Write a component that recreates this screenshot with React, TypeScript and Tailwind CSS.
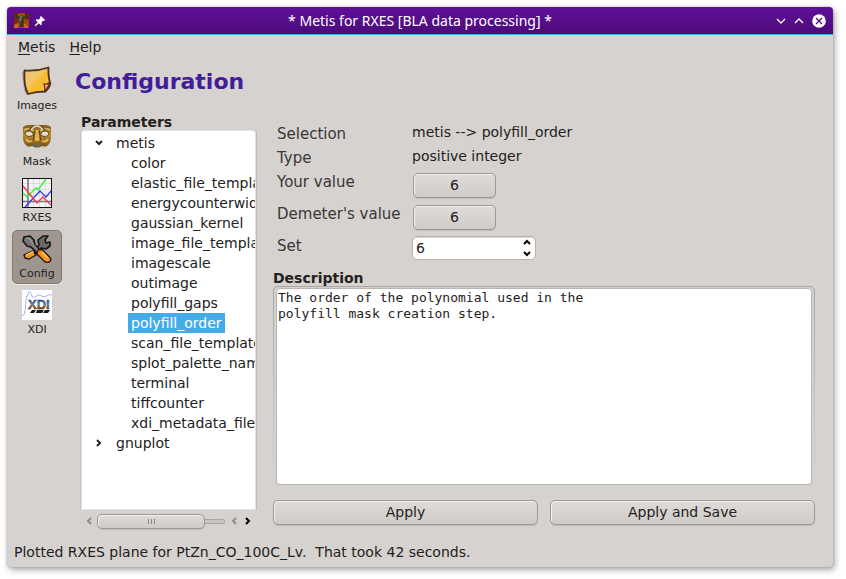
import { useState } from "react";
import type { ReactNode } from "react";

const parameters = [
  "color",
  "elastic_file_template",
  "energycounterwidth",
  "gaussian_kernel",
  "image_file_template",
  "imagescale",
  "outimage",
  "polyfill_gaps",
  "polyfill_order",
  "scan_file_template",
  "splot_palette_name",
  "terminal",
  "tiffcounter",
  "xdi_metadata_file",
];

const raised =
  "rounded-[5px] border border-[#9c9894] bg-linear-to-b from-[#dedbd8] to-[#cfcbc8] shadow-[inset_1px_1px_0_#f3f1f0,0_1px_0_#c2beba]";

const fieldLabel = "pt-[2px] text-[15px] leading-[20px] text-[#3a3735]";

function Chevron({ d, className = "stroke-2" }: { d: string; className?: string }) {
  return (
    <svg viewBox="0 0 10 10" className={`block size-[10px] shrink-0 fill-none stroke-current ${className}`}>
      <path d={d} />
    </svg>
  );
}

function AppIcon() {
  return (
    <svg viewBox="0 0 16 16" className="size-[15px]">
      <rect width="16" height="16" fill="#a4470f" />
      <path d="M0 0h5l-2 5 1 5-4 2zM11 0h5v6l-3 2-1-4z" fill="#652a0d" />
      <path d="M2 2l4 2 2-2 2 2 4-2-1 3-3 2 1 4-1 4H6l0-4-2-4-2-2z" fill="#3a3324" />
      <path d="M7 3l2 1-1 2-2 0zM4 5l2 2 2-1-1 4z" fill="#8b8060" />
      <path d="M10 11l3 1 2 4h-4zM0 13l5-2-1 5H0z" fill="#ce671b" />
    </svg>
  );
}

function PinIcon() {
  return (
    <svg viewBox="0 0 10 10" className="size-[10px] fill-white">
      <path d="M6 0l4 4-1 1-1-.3-1.500 1.500.3 2.300-1 .8-2-2L1 10H0V9l2.700-2.800-2-2 .8-1 2.300.3L5.300 2 5 1z" />
    </svg>
  );
}

function ImagesIcon() {
  return (
    <svg viewBox="0 0 30 30" className="size-[30px]">
      <defs>
        <linearGradient id="paper" x1="0" y1="0" x2="1" y2="1">
          <stop offset="0" stopColor="#e6c376" />
          <stop offset="0.400" stopColor="#f3c868" />
          <stop offset="0.550" stopColor="#f8bb30" />
          <stop offset="1" stopColor="#f4c043" />
        </linearGradient>
      </defs>
      <path d="M0 6l3-2 2 20 3 3-3 2-3-4z" fill="#a8a39f" />
      <path d="M2.500 4.500Q15 5.500 26.500 1.500 26 11 28.300 17.500 28 21 23.500 25.500 14 25.500 6 28 1.500 20 2.500 4.500z" fill="url(#paper)" stroke="#4f2f22" strokeWidth="1.800" strokeLinejoin="round" />
      <path d="M27.500 16.500q-2 2-5.500 1.500 1.500 3.500.5 7 4-2.500 5-8.500z" fill="#e8662d" stroke="#5b2c1c" strokeWidth="1.200" />
      <path d="M23 19l2.500-.5-1.500 4z" fill="#ffc09a" />
    </svg>
  );
}

function MaskIcon() {
  return (
    <svg viewBox="0 0 30 30" className="size-[30px]">
      <defs>
        <linearGradient id="gold" x1="0" y1="0" x2="0" y2="1">
          <stop offset="0" stopColor="#7d5b1b" />
          <stop offset="0.450" stopColor="#b98c33" />
          <stop offset="1" stopColor="#714a10" />
        </linearGradient>
      </defs>
      <path d="M1 5Q4 2.500 8 3h14q4-.5 7 2v12q-1 5-4 7-2 1-5 0-5 3-10 0-3 1-5 0-3-2-4-7z" fill="url(#gold)" />
      <path d="M2 8q5-3 10 1M28 8q-5-3-10 1" stroke="#dbb85c" strokeWidth="1.500" fill="none" />
      <path d="M7 8l5-4M23 8l-5-4" stroke="#50380f" strokeWidth="1.200" />
      <path d="M9 8q3-4 6-4t6 4" stroke="#e8e2d6" strokeWidth="1.300" fill="none" />
      <path d="M3 11q4-4 8 0 1 3-4 3.500-4 0-4-3.500zM19 11q4-4 8 0 0 3.500-4 3.500-5-.5-4-3.500z" fill="#e3ddd7" stroke="#4c3410" strokeWidth=".8" />
      <path d="M14 8l-1.500 10 2.500 1.500 2.500-1.500L16 8z" fill="#e1b64c" />
      <path d="M12.500 9l-1 9M17.500 9l1 9" stroke="#4d330b" strokeWidth="1" />
      <path d="M4 17q2 4 6 2M26 17q-2 4-6 2" stroke="#e5bc58" strokeWidth="1.800" fill="none" />
      <path d="M10 23q5-2 10 0-5 3.500-10 0z" fill="#69675f" />
    </svg>
  );
}

function PlotIcon() {
  return (
    <svg viewBox="0 0 30 30" className="size-[30px]" fill="none">
      <rect x=".5" y=".5" width="29" height="29" fill="#f4f3f4" stroke="#111" />
      <path d="M1 5.500h28M1 11.500h28M1 17.500h28M11.500 1v28M17.500 1v28M23.500 1v28" stroke="#dbdadd" />
      <path d="M6 1v28M1 23.500h28" stroke="#777" strokeWidth="1.500" />
      <path d="M1 15l4 4 9-9 2 2 8-11" stroke="#35ef35" strokeWidth="1.300" />
      <path d="M3 29L18 13l6 6 5-6" stroke="#3737f2" strokeWidth="1.300" />
      <path d="M1 8l14 17 6-6 8 8" stroke="#f03743" strokeWidth="1.300" />
    </svg>
  );
}

function ToolsIcon() {
  return (
    <svg viewBox="0 0 30 30" className="size-[30px]" strokeLinejoin="round">
      <path d="M13 16l3 4-9 5-4-1-1-3z" fill="#f99a20" stroke="#221d18" strokeWidth="1.400" />
      <path d="M4 21l8-4" stroke="#ffd07c" strokeWidth="1.300" />
      <path d="M12 16l5-5-1-5 5-4h5l-3 4 1 3 4-1 0 4-4 3-5-1-6 6z" fill="#6b6763" stroke="#161616" strokeWidth="1.600" />
      <path d="M2 3l6-1 4 4 1 5 5 5-3 3-6-6-4-1-4-5z" fill="#777573" stroke="#161616" strokeWidth="1.600" />
      <path d="M4 4l4 1 3 5 5 6" stroke="#aaa7a3" strokeWidth="1" fill="none" />
      <path d="M16 16l4-.5 8 8q2 3-1 4.500-3 1-5-1l-7-7z" fill="#fa951d" stroke="#221d18" strokeWidth="1.400" />
      <path d="M15.500 16.500l3-1-3 4z" fill="#e22a1c" />
      <path d="M20 18l6 6" stroke="#ffc568" strokeWidth="1.500" />
    </svg>
  );
}

function XdiIcon() {
  return (
    <svg viewBox="0 0 30 30" className="size-[30px]">
      <defs>
        <linearGradient id="steel" x1="0" y1="0" x2="0" y2="1">
          <stop offset="0.200" stopColor="#275377" />
          <stop offset="0.500" stopColor="#5f7f94" />
          <stop offset="0.650" stopColor="#8c5a30" />
          <stop offset="0.850" stopColor="#41291d" />
        </linearGradient>
      </defs>
      <rect width="30" height="30" fill="#fff" />
      <path d="M0 26q3 0 3.500-9Q4 4 5.500 6q1-7 3-3l2 4q2 1 4-1t5 0 5 0 5-1" fill="none" stroke="#a9adf0" strokeWidth="1" />
      <path d="M10 20h4l-2 3H8zM15 20h7l-2 3h-6zM23 20h5l-2 3h-5z" fill="#191919" />
      <text x="6" y="19" fontFamily="Liberation Sans Narrow, Liberation Sans" fontWeight="700" fontSize="13" fill="url(#steel)" stroke="url(#steel)" strokeWidth=".5">XDI</text>
    </svg>
  );
}

function Tool({ label, active = false, children }: { label: string; active?: boolean; children: ReactNode }) {
  return (
    <button
      className={`flex h-[54px] w-[50px] flex-col items-center rounded-[5px] border pt-[3px] text-[11px] leading-[16px] ${
        active ? "border-[#817a75] bg-linear-to-b from-[#a29790] to-[#9d948e] shadow-[0_1px_0_#eeebe8]" : "border-transparent"
      }`}
    >
      {children}
      <span className="mt-[2px]">{label}</span>
    </button>
  );
}

export default function App() {
  const [selected, setSelected] = useState("polyfill_order");
  const [value, setValue] = useState(6);

  return (
    <div className="flex h-screen bg-white pt-[7px] pr-[13px] pb-[12px] pl-[7px] font-['DejaVu_Sans',sans-serif] text-[14px] text-[#232120]">
      <div className="flex min-w-0 flex-1 flex-col rounded-[4px] bg-[#d6d2cf] shadow-[0_0_2px_#9a9a9a,2px_3px_6px_#aaa]">
        <header className="flex h-[28px] shrink-0 items-center rounded-t-[4px] border-b border-[#3daee9] bg-linear-to-b from-[#600f99] to-[#4c0b7a] px-[7px] text-white">
          <div className="flex w-[52px] items-center gap-[6px]">
            <AppIcon />
            <PinIcon />
          </div>
          <h1 className="flex-1 text-center font-['Noto_Sans',sans-serif] text-[14px]">* Metis for RXES [BLA data processing] *</h1>
          <div className="flex w-[52px] items-center justify-end gap-[8px]">
            <button aria-label="Minimize">
              <Chevron d="M1 3l4 4 4-4" className="stroke-[1.300]" />
            </button>
            <button aria-label="Maximize">
              <Chevron d="M1 7l4-4 4 4" className="stroke-[1.300]" />
            </button>
            <button aria-label="Close">
              <svg viewBox="0 0 14 14" className="size-[14px]">
                <circle cx="7" cy="7" r="6.800" fill="#fff" />
                <path d="M4 4l6 6M10 4l-6 6" stroke="#560d89" strokeWidth="1.300" />
              </svg>
            </button>
          </div>
        </header>

        <nav className="flex h-[25px] shrink-0 items-center gap-[14px] px-[11px]">
          <button><u className="underline-offset-2">M</u>etis</button>
          <button><u className="underline-offset-2">H</u>elp</button>
        </nav>

        <div className="flex min-h-0 flex-1">
          <aside className="flex w-[68px] shrink-0 flex-col gap-[2px] pt-[2px] pl-[5px]">
            <Tool label="Images"><ImagesIcon /></Tool>
            <Tool label="Mask"><MaskIcon /></Tool>
            <Tool label="RXES"><PlotIcon /></Tool>
            <Tool label="Config" active><ToolsIcon /></Tool>
            <Tool label="XDI"><XdiIcon /></Tool>
          </aside>

          <main className="flex min-w-0 flex-1 flex-col pr-[18px]">
            <h2 className="h-[55px] shrink-0 pt-[8px] text-[22px] leading-[28px] font-bold text-[#421c9c]">Configuration</h2>

            <div className="flex min-h-0 flex-1 gap-[16px]">
              <section className="flex w-[182px] shrink-0 flex-col pl-[6px]">
                <h3 className="h-[15px] shrink-0 leading-[15px] font-bold">Parameters</h3>
                <div className="mr-px flex min-h-0 flex-1 flex-col overflow-hidden rounded-t-[3px] border border-[#e5e2e0] bg-white pt-[2px] shadow-[-1px_0_0_#c6c2bf,1px_0_0_#c0bcb9]">
                  <ul>
                    <li>
                      <button className="flex h-[20px] w-full items-center gap-[12px] pl-[12px]">
                        <Chevron d="M2 3l3 3 3-3" />metis
                      </button>
                      <ul>
                        {parameters.map((name) => (
                          <li key={name} className="h-[20px] pl-[46px]">
                            <button
                              onClick={() => setSelected(name)}
                              className={`h-[20px] px-[3px] leading-[20px] whitespace-nowrap ${selected === name ? "bg-[#43ace8] text-white" : ""}`}
                            >
                              {name}
                            </button>
                          </li>
                        ))}
                      </ul>
                    </li>
                    <li>
                      <button className="flex h-[20px] w-full items-center gap-[12px] pl-[12px]">
                        <Chevron d="M3 2l3 3-3 3" />gnuplot
                      </button>
                    </li>
                  </ul>
                </div>
                <div className="flex h-[21px] shrink-0 items-center px-[4px] pt-px">
                  <button aria-label="Scroll left" className="text-[#918d89]"><Chevron d="M6 2L3 5l3 3" /></button>
                  <div className="ml-[2px] flex min-w-0 flex-1 items-center">
                    <div className={`flex h-[15px] w-[108px] items-center justify-center gap-[2px] ${raised}`}>
                      <i className="h-[5px] w-px bg-[#8d8985]" />
                      <i className="h-[5px] w-px bg-[#8d8985]" />
                      <i className="h-[5px] w-px bg-[#8d8985]" />
                    </div>
                    <div className="h-[5px] flex-1 rounded-r-[3px] border border-l-0 border-[#a9a5a1] bg-[#c8c4c0]" />
                  </div>
                  <button aria-label="Page left" className="ml-[4px] text-[#918d89]"><Chevron d="M7 2L4 5l3 3" /></button>
                  <button aria-label="Scroll right" className="ml-[4px] text-black"><Chevron d="M3 2l3 3-3 3" /></button>
                </div>
              </section>

              <section className="flex min-w-0 flex-1 flex-col">
                <div className="mt-[7px] mb-[3px] grid shrink-0 grid-cols-[135px_1fr] grid-rows-[24px_24px_32px_32px_32px] pl-[4px]">
                  <span className={fieldLabel}>Selection</span>
                  <span className="leading-[20px]">metis --&gt; {selected}</span>
                  <span className={fieldLabel}>Type</span>
                  <span className="leading-[20px]">positive integer</span>
                  <span className={fieldLabel}>Your value</span>
                  <button className={`mt-[3px] ml-px h-[25px] w-[83px] ${raised}`}>6</button>
                  <span className={fieldLabel}>Demeter&apos;s value</span>
                  <button className={`mt-[3px] ml-px h-[25px] w-[83px] ${raised}`}>6</button>
                  <label htmlFor="set-value" className={fieldLabel}>Set</label>
                  <div className="mt-[2px] flex h-[24px] w-[124px] items-center rounded-[5px] border border-[#b5b1ad] bg-white px-[3px] shadow-[inset_0_1px_0_#dedbd8]">
                    <input
                      id="set-value"
                      value={value}
                      onChange={(event) => setValue(Number(event.target.value) || 0)}
                      className="min-w-0 flex-1 bg-transparent outline-none"
                    />
                    <div className="flex flex-col text-black">
                      <button aria-label="Increase" onClick={() => setValue(value + 1)}><Chevron d="M2 6l3-3 3 3" /></button>
                      <button aria-label="Decrease" onClick={() => setValue(value - 1)}><Chevron d="M2 4l3 3 3-3" /></button>
                    </div>
                  </div>
                </div>

                <label htmlFor="description" className="h-[17px] shrink-0 leading-[18px] font-bold">Description</label>
                <div className="flex min-h-0 flex-1 rounded-t-[5px] bg-linear-to-b from-[#aaa6a2] to-[#d6d2cf] px-px pt-px">
                  <div className="flex min-w-0 flex-1 rounded-t-[4px] bg-[#d4d0cd] px-[2px] pt-px">
                    <textarea
                      id="description"
                      readOnly
                      className="min-w-0 flex-1 resize-none rounded-[4px] border border-[#bab6b2] bg-white px-px py-px font-['DejaVu_Sans_Mono',monospace] text-[13px] leading-[16px] outline-none"
                      value={"The order of the polynomial used in the\npolyfill mask creation step."}
                    />
                  </div>
                </div>
                <div className="mt-[15px] mb-[6px] grid shrink-0 grid-cols-2 gap-[12px]">
                  <button className={`h-[25px] ${raised}`}>Apply</button>
                  <button className={`h-[25px] ${raised}`}>Apply and Save</button>
                </div>
              </section>
            </div>
          </main>
        </div>

        <footer className="h-[36px] shrink-0 pl-[7px] leading-[42px] whitespace-pre">Plotted RXES plane for PtZn_CO_100C_Lv.  That took 42 seconds.</footer>
      </div>
    </div>
  );
}
